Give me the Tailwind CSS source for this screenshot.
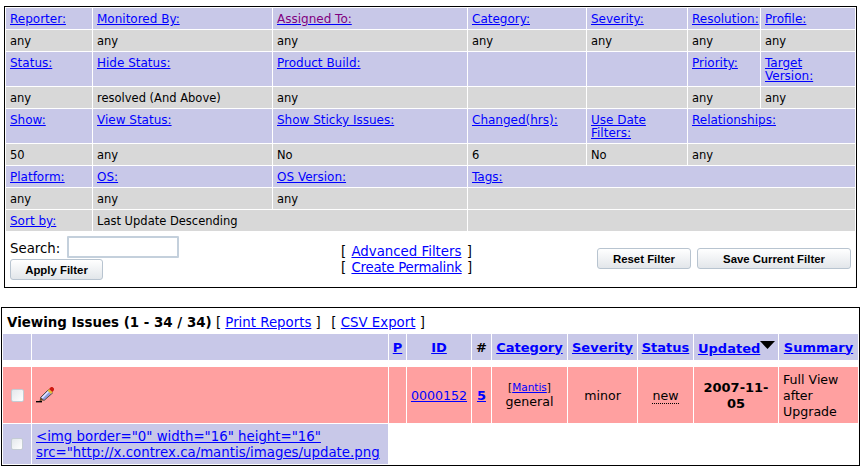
<!DOCTYPE html>
<html lang="en">
<head>
  <meta charset="UTF-8">
  <title>View Issues</title>
  <script src="https://cdn.jsdelivr.net/npm/@tailwindcss/browser@4"></script>
</head>
<body class="bg-white text-black font-['DejaVu_Sans',sans-serif] text-[12px] leading-[13px]">

  <!-- Filter box -->
  <div class="ml-[4px] mt-[6px] w-[853px] h-[282px] border border-black">
    <table class="table-fixed border-separate border-spacing-[1px] w-[851px]">
      <colgroup>
        <col class="w-[86px]"><col class="w-[179px]"><col class="w-[194px]"><col class="w-[118px]"><col class="w-[100px]"><col class="w-[72px]"><col class="w-[94px]">
      </colgroup>
      <tbody>
        <tr class="bg-[#c8c8e8] align-top [&>td]:px-[4px] [&>td]:pt-[5px] [&>td]:pb-[3px] text-[#0000ff] underline">
          <td>Reporter:</td><td>Monitored By:</td><td class="text-[#800080]">Assigned To:</td><td>Category:</td><td>Severity:</td><td class="whitespace-nowrap">Resolution:</td><td>Profile:</td>
        </tr>
        <tr class="bg-[#d8d8d8] align-top text-[11.5px] [&>td]:px-[4px] [&>td]:pt-[5px] [&>td]:pb-[3px]">
          <td>any</td><td>any</td><td>any</td><td>any</td><td>any</td><td>any</td><td>any</td>
        </tr>
        <tr class="bg-[#c8c8e8] align-top [&>td]:px-[4px] [&>td]:pt-[5px] [&>td]:pb-[3px] text-[#0000ff] underline">
          <td>Status:</td><td>Hide Status:</td><td>Product Build:</td><td></td><td></td><td>Priority:</td><td>Target Version:</td>
        </tr>
        <tr class="bg-[#d8d8d8] align-top text-[11.5px] [&>td]:px-[4px] [&>td]:pt-[5px] [&>td]:pb-[3px]">
          <td>any</td><td>resolved (And Above)</td><td>any</td><td></td><td></td><td>any</td><td>any</td>
        </tr>
        <tr class="bg-[#c8c8e8] align-top [&>td]:px-[4px] [&>td]:pt-[5px] [&>td]:pb-[3px] text-[#0000ff] underline">
          <td>Show:</td><td>View Status:</td><td>Show Sticky Issues:</td><td>Changed(hrs):</td><td>Use Date Filters:</td><td colspan="2">Relationships:</td>
        </tr>
        <tr class="bg-[#d8d8d8] align-top text-[11.5px] [&>td]:px-[4px] [&>td]:pt-[5px] [&>td]:pb-[3px]">
          <td>50</td><td>any</td><td>No</td><td>6</td><td>No</td><td colspan="2">any</td>
        </tr>
        <tr class="bg-[#c8c8e8] align-top [&>td]:px-[4px] [&>td]:pt-[5px] [&>td]:pb-[3px] text-[#0000ff] underline">
          <td>Platform:</td><td>OS:</td><td>OS Version:</td><td colspan="4">Tags:</td>
        </tr>
        <tr class="bg-[#d8d8d8] align-top text-[11.5px] [&>td]:px-[4px] [&>td]:pt-[5px] [&>td]:pb-[3px]">
          <td>any</td><td>any</td><td>any</td><td colspan="4"></td>
        </tr>
        <tr class="bg-[#d8d8d8] align-top text-[11.5px] [&>td]:px-[4px] [&>td]:pt-[5px] [&>td]:pb-[3px]">
          <td class="text-[12px] text-[#0000ff] underline">Sort by:</td><td colspan="2">Last Update Descending</td><td colspan="4"></td>
        </tr>
      </tbody>
    </table>

    <!-- Search row -->
    <div class="flex pl-[5px] pr-[5px] pt-[4px] text-[13.33px] leading-[16px]">
      <div class="w-[331px]">
        <div class="flex items-start gap-[7px]">
          <span class="mt-[5px]">Search:</span>
          <input type="text" class="w-[112px] h-[22px] bg-white border-2 border-[#c4d0dc] rounded-[1px]">
        </div>
        <button class="block mt-[1px] w-[93px] h-[21px] rounded-[3px] border border-[#b8c4d0] bg-gradient-to-b from-white to-[#e2e6ea] font-['Liberation_Sans',sans-serif] text-[11.4px] font-bold">Apply Filter</button>
      </div>
      <div class="pt-[8px]">
        <div>[&nbsp;<span class="ml-[1px] mr-[1px] text-[#0000ff] underline">Advanced Filters</span>&nbsp;]</div>
        <div>[&nbsp;<span class="ml-[1px] mr-[1px] tracking-[-0.25px] text-[#0000ff] underline">Create Permalink</span>&nbsp;]</div>
      </div>
      <div class="ml-auto pt-[12px] flex gap-[6px]">
        <button class="w-[94px] h-[21px] rounded-[3px] border border-[#b8c4d0] bg-gradient-to-b from-white to-[#e2e6ea] font-['Liberation_Sans',sans-serif] text-[11.4px] font-bold">Reset Filter</button>
        <button class="w-[154px] h-[21px] rounded-[3px] border border-[#b8c4d0] bg-gradient-to-b from-white to-[#e2e6ea] font-['Liberation_Sans',sans-serif] text-[11.4px] font-bold">Save Current Filter</button>
      </div>
    </div>
  </div>

  <!-- Issue list -->
  <div class="ml-[1px] mt-[19px] w-[859px] h-[159px] border border-black text-[12.6px] leading-[16px]">
    <table class="table-fixed border-separate border-spacing-[1px] w-[857px]">
      <colgroup>
        <col class="w-[28px]"><col class="w-[356px]"><col class="w-[17px]"><col class="w-[64px]"><col class="w-[19px]"><col class="w-[75px]"><col class="w-[69px]"><col class="w-[55px]"><col class="w-[84px]"><col class="w-[79px]">
      </colgroup>
      <tbody>
        <tr class="h-[24px]">
          <td colspan="10" class="px-[4px] pt-[3px] text-[13.33px]">
            <b class="text-[13.4px]">Viewing Issues (1 - 34 / 34)</b> [&nbsp;<span class="text-[#0000ff] underline">Print Reports</span>&nbsp;]&nbsp; <span class="ml-[2px]">[</span>&nbsp;<span class="text-[#0000ff] underline">CSV Export</span>&nbsp;]
          </td>
        </tr>
        <tr class="h-[26px] bg-[#c8c8e8] text-center text-[13px] font-bold text-[#0000ff] [&>td]:p-0 [&>td]:pt-[1px]">
          <td></td>
          <td></td>
          <td class="underline">P</td>
          <td class="underline">ID</td>
          <td class="text-black">#</td>
          <td class="underline">Category</td>
          <td class="underline">Severity</td>
          <td class="underline">Status</td>
          <td class="!pl-[4px] text-left whitespace-nowrap">
            <span class="underline relative top-[1px]">Updated</span><svg class="inline-block align-[3px]" width="15" height="8" viewBox="0 0 15 8"><path d="M0 0h15L7.5 8z" fill="#000"/></svg>
          </td>
          <td class="underline">Summary</td>
        </tr>
        <tr class="h-[5px]"><td colspan="10" class="p-0"></td></tr>
        <tr class="h-[56px] bg-[#ffa0a0] text-center [&>td]:px-[4px] [&>td]:pt-[2px]">
          <td class="!px-0 !pt-0">
            <input type="checkbox" class="block mx-auto appearance-none w-[13px] h-[13px] rounded-[2px] border border-[#c4ccd4] bg-gradient-to-br from-[#e4e8ec] to-white">
          </td>
          <td class="text-left !pt-0">
            <svg class="block" width="18" height="16" viewBox="0 0 18 16">
              <path d="M0 14h6v1.4H0z" fill="#000"/>
              <path d="M3.5 14l1-4 3.5 3.2z" fill="#6b4a20"/>
              <path d="M4.500 10.500l8-8 4 3.500-8.500 7.500z" fill="#8e9ce0" stroke="#5c4a40" stroke-width="1"/>
              <path d="M6 11l6.500-6.500" stroke="#e8ecff" stroke-width="1.500"/>
              <path d="M11.500 3.500l1.500-1.500 3.500 3-1.500 2z" fill="#e8c030"/>
              <path d="M13 2l2-2h1.500L18 1.500V3l-1.500 2z" fill="#d01810"/>
            </svg>
          </td>
          <td></td>
          <td class="!px-0"><span class="text-[#0000ff] underline">0000152</span></td>
          <td class="!px-0 font-bold text-[13px] text-[#0000ff] underline">5</td>
          <td class="!px-0 !pt-0">
            <div class="text-[10.5px] leading-[13px]">[<span class="text-[#0000ff] underline">Mantis</span>]</div>
            <div class="leading-[15px]">general</div>
          </td>
          <td>minor</td>
          <td><span class="border-b border-dotted border-black">new</span></td>
          <td class="font-bold text-[13px]">2007-11-05</td>
          <td class="text-left">Full View after Upgrade</td>
        </tr>
        <tr class="h-[40px] align-middle">
          <td class="bg-[#c8c8e8] p-0">
            <input type="checkbox" class="block mx-auto appearance-none w-[12px] h-[12px] rounded-[2px] border border-[#c4ccd4] bg-gradient-to-br from-[#e4e8ec] to-white">
          </td>
          <td class="bg-[#c8c8e8] px-[4px] pt-[2px] text-[13.33px] text-[#0000ff] underline">&lt;img border="0" width="16" height="16" src="http://x.contrex.ca/mantis/images/update.png</td>
          <td colspan="8"></td>
        </tr>
      </tbody>
    </table>
  </div>

</body>
</html>
